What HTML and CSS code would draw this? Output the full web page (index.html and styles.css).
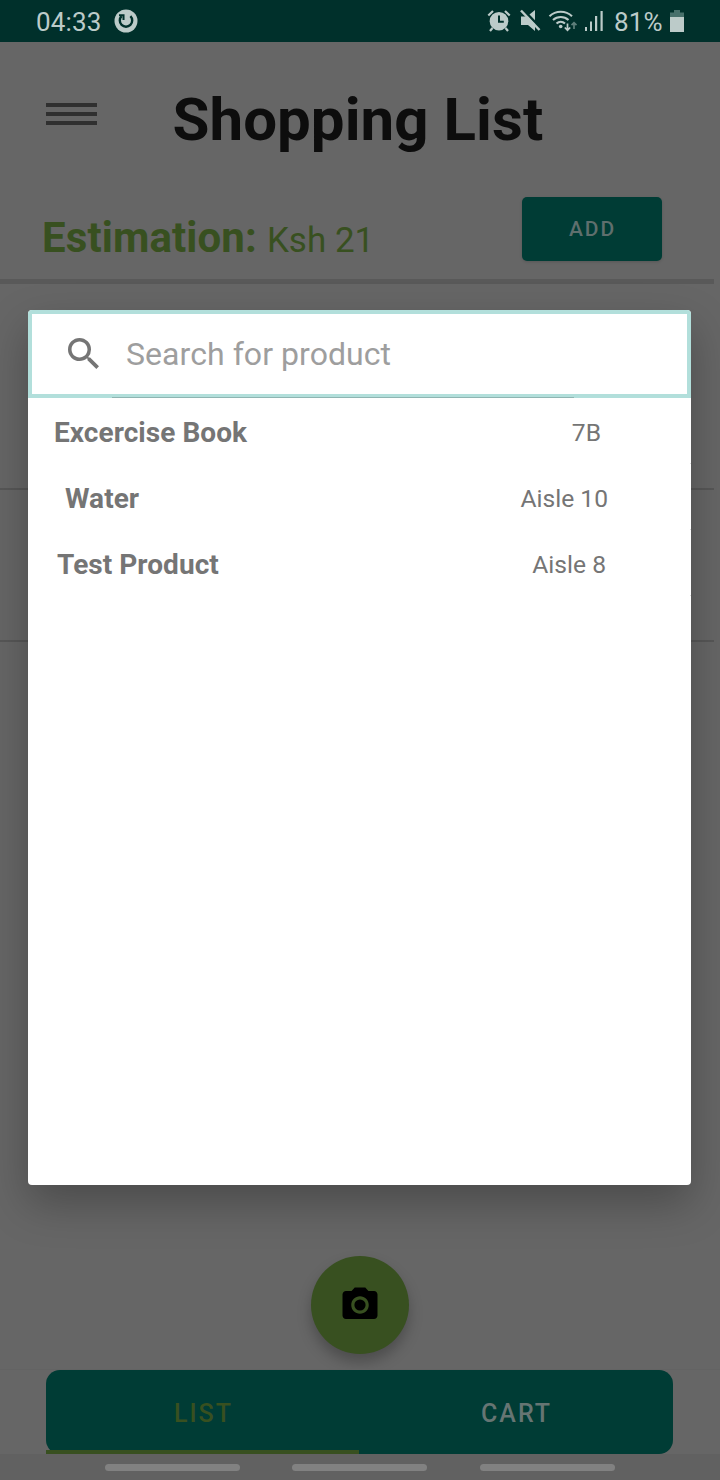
FILE: index.html
```html
<!DOCTYPE html>
<html lang="en">
<head>
<meta charset="utf-8">
<title>Shopping List</title>
<link rel="stylesheet" href="styles.css">
</head>
<body>
<div class="screen">
  <header class="status">
    <span class="clock">04:33</span>
    <svg class="sync" width="24" height="24" viewBox="0 0 24 24"><circle cx="12" cy="12" r="11.5" fill="#bccbc9"/><path d="M7.6 7.2A6.2 6.2 0 1 0 16.4 7.2" fill="none" stroke="#00302b" stroke-width="2.4"/><path d="M5 5.2h5.7v5.9H8.500V7.200H5z" fill="#00302b"/><path d="M12 5v7" stroke="#bccbc9" stroke-width="2.500"/></svg>
    <span class="spacer"></span>
    <svg class="alarm" width="24" height="24" viewBox="0 0 24 24" fill="none" stroke="#bccbc9"><circle cx="12" cy="12.200" r="9.300" fill="#bccbc9" stroke="none"/><path d="M12 6.500v6.300h4.800" stroke="#00302b" stroke-width="2"/><path d="M1.300 6.500 6 2M22.700 6.500 18 2M5.500 19l-2.500 3M18.500 19l2.500 3" stroke-width="2.200"/></svg>
    <svg class="mute" width="22" height="24" viewBox="0 0 22 24"><path d="M1 7.500h6L15 1v21l-7-6H1z" fill="#bccbc9"/><path d="M2.500 0 21 19.500" stroke="#00302b" stroke-width="2.600"/><path d="M1 1.500 19.500 21" stroke="#bccbc9" stroke-width="2.500"/></svg>
    <svg class="wifi" width="30" height="24" viewBox="0 0 30 24" fill="none" stroke="#bccbc9" stroke-width="2.100"><path d="M1.500 7.200a16.500 16.500 0 0 1 22.500 0M5 11a11.500 11.500 0 0 1 15.500 0M8.500 14.500a6.500 6.500 0 0 1 8.500 0"/><circle cx="12.700" cy="17.500" r="1.800" fill="#bccbc9" stroke="none"/><path d="M19.500 14.500v6.500M16.800 18.500l2.700 2.700 2.700-2.700" stroke-width="1.700"/><path d="M26 20v-6M23.500 16.200l2.500-2.500 2.500 2.500" stroke="#5f7f7b" stroke-width="1.700"/></svg>
    <svg class="signal" width="20" height="24" viewBox="0 0 20 24" fill="#bccbc9"><rect x="1" y="18" width="2" height="4"/><rect x="6" y="12.500" width="2" height="9.500"/><rect x="11" y="7" width="2.200" height="15"/><rect x="16.500" y="2" width="2.200" height="20"/></svg>
    <span class="percent">81%</span>
    <svg class="battery" width="14" height="22" viewBox="0 0 14 22"><path d="M4 0h6v2.500h4V8H0V2.500h4z" fill="#47706b"/><path d="M0 7h14v15H0z" fill="#bccbc9"/></svg>
  </header>

  <section class="head">
    <div class="menu"><i></i><i></i><i></i></div>
    <h1 class="title">Shopping List</h1>
  </section>
  <section class="summary">
    <p class="estimate"><b>Estimation:</b><span>Ksh 21</span></p>
    <button class="add">ADD</button>
  </section>

  <main class="list">
    <div class="item"></div>
    <div class="item"></div>
  </main>

  <div class="fab"><svg width="42" height="42" viewBox="0 0 24 24"><circle cx="12" cy="12" r="3.200"/><path d="M9 2 7.170 4H4c-1.100 0-2 .9-2 2v12c0 1.100.9 2 2 2h16c1.100 0 2-.9 2-2V6c0-1.100-.9-2-2-2h-3.170L15 2H9zm3 15c-2.760 0-5-2.240-5-5s2.240-5 5-5 5 2.240 5 5-2.240 5-5 5z"/></svg></div>

  <div class="tabbar">
    <nav class="tabs">
      <span class="tab tab-active"><em>LIST</em></span>
      <span class="tab"><em>CART</em></span>
      <div class="indicator"></div>
    </nav>
  </div>
  <footer class="navbar"><i></i><i></i><i></i></footer>

  <div class="dialog">
    <div class="search">
      <svg width="31" height="31" viewBox="3 3 17.500 17.500"><path fill="#757575" d="M15.500 14h-.79l-.28-.27A6.471 6.471 0 0 0 16 9.500 6.500 6.500 0 1 0 9.500 16c1.610 0 3.090-.59 4.230-1.570l.27.28v.79l5 4.990L20.490 19l-4.990-5zm-6 0C7.010 14 5 11.990 5 9.500S7.010 5 9.500 5 14 7.010 14 9.500 11.990 14 9.500 14z"/></svg>
      <span class="placeholder">Search for product</span>
      <div class="underline"></div>
    </div>
    <div class="result book"><b>Excercise Book</b><span>7B</span></div>
    <div class="result water"><b>Water</b><span>Aisle 10</span></div>
    <div class="result test"><b>Test Product</b><span>Aisle 8</span></div>
  </div>
</div>
</body>
</html>
```
FILE: styles.css
```css
* { box-sizing: border-box; }
body { margin: 0; font-family: Roboto, sans-serif; }
.screen { position: relative; width: 720px; height: 1480px; background: #666; display: flex; flex-direction: column; overflow: hidden; }
.spacer { flex: 1; }

.status { height: 42px; flex: none; background: #00302b; color: #bccbc9; display: flex; align-items: center; padding: 0 36px; font-size: 26px; line-height: 42px; }
.clock { width: 77px; padding-top: 1px; letter-spacing: .15px; }
.sync { margin-left: .5px; }
.alarm { margin-right: 9px; }
.mute { margin-right: 6px; }
.wifi { margin-right: 6px; }
.signal { margin-right: 10px; }
.percent { width: 56px; padding-top: 1px; letter-spacing: .2px; }
.battery { margin: -1px 0 0; }

.head { height: 146px; flex: none; display: flex; padding: 37px 46px 0; }
.menu { width: 126.5px; padding-top: 24px; }
.menu i { display: block; width: 51px; height: 4px; margin-bottom: 5px; background: #303030; }
.title { margin: 0; font-size: 60px; line-height: 82px; font-weight: 700; letter-spacing: .05px; color: #0d0d0d; white-space: nowrap; }

.summary { width: 714px; height: 96px; flex: none; display: flex; justify-content: space-between; padding: 9px 52px 0 42px; border-bottom: 5px solid #595959; }
.estimate { margin: 0; padding-top: 12px; color: #385020; line-height: 58px; white-space: nowrap; }
.estimate b { font-size: 42px; letter-spacing: .1px; }
.estimate span { font-size: 35px; margin-left: 10px; }
.add { width: 140px; height: 64px; border: 0; border-radius: 5px; background: #003c35; color: #5f6f6d; font: 500 21px/64px Roboto, sans-serif; letter-spacing: 1.9px; padding: 0 0 0 1px; box-shadow: 0 1px 3px rgba(0, 0, 0, .15); }

.list { width: 714px; height: 972px; flex: none; }
.item { height: 152px; border-bottom: 2px solid #575757; }
.item:first-child { height: 206px; }

.fab { width: 98px; height: 98px; flex: none; align-self: center; border-radius: 50%; background: #385020; display: flex; align-items: center; justify-content: center; box-shadow: 0 8px 14px rgba(0, 0, 0, .25); }
.tabbar { height: 85px; flex: none; margin-top: 15px; padding: 0 0 0 46px; border-top: 1px solid #636363; }
.tabs { position: relative; width: 627px; height: 84px; background: #003c35; border-radius: 14px; display: flex; }
.tab { flex: 1; display: flex; justify-content: center; font-size: 25px; font-weight: 500; line-height: 87px; letter-spacing: 2px; color: #667573; }
.tab em { font-style: normal; }
.tab-active { color: #385020; padding-left: 1px; }
.indicator { position: absolute; left: 0; bottom: 0; width: 313px; height: 4px; background: #385020; }
.navbar { height: 26px; flex: none; background: #616161; display: flex; padding: 10px 0 0 105px; }
.navbar i { width: 135px; height: 7px; margin-right: 52px; border-radius: 4px; background: #818181; }
.navbar i:nth-child(2) { margin-right: 53px; }

.dialog { position: absolute; left: 28px; top: 310px; width: 663px; height: 875px; background: #fff; border-radius: 4px; box-shadow: 0 18px 44px rgba(0, 0, 0, .27); }
.search { position: relative; height: 88px; border: 4px solid #b2dfdb; border-radius: 4px 4px 0 0; display: flex; align-items: center; padding-left: 36px; }
.search svg { flex: none; margin-top: -1px; }
.placeholder { margin-left: 27px; font-size: 32px; line-height: 40px; letter-spacing: .06px; color: #9e9e9e; }
.underline { position: absolute; left: 80px; bottom: -4px; width: 462px; height: 1px; background: #8fb5b2; }
.result { height: 66px; display: flex; justify-content: space-between; line-height: 69px; color: #757575; background: linear-gradient(#ddd, #ddd) right bottom / 1px 1px no-repeat; }
.result b { font-size: 28px; letter-spacing: .05px; }
.result span { font-size: 24.6px; }
.book { padding: 0 90px 0 26px; }
.water { padding: 0 83px 0 37px; }
.test { padding: 0 85px 0 29px; }
```
